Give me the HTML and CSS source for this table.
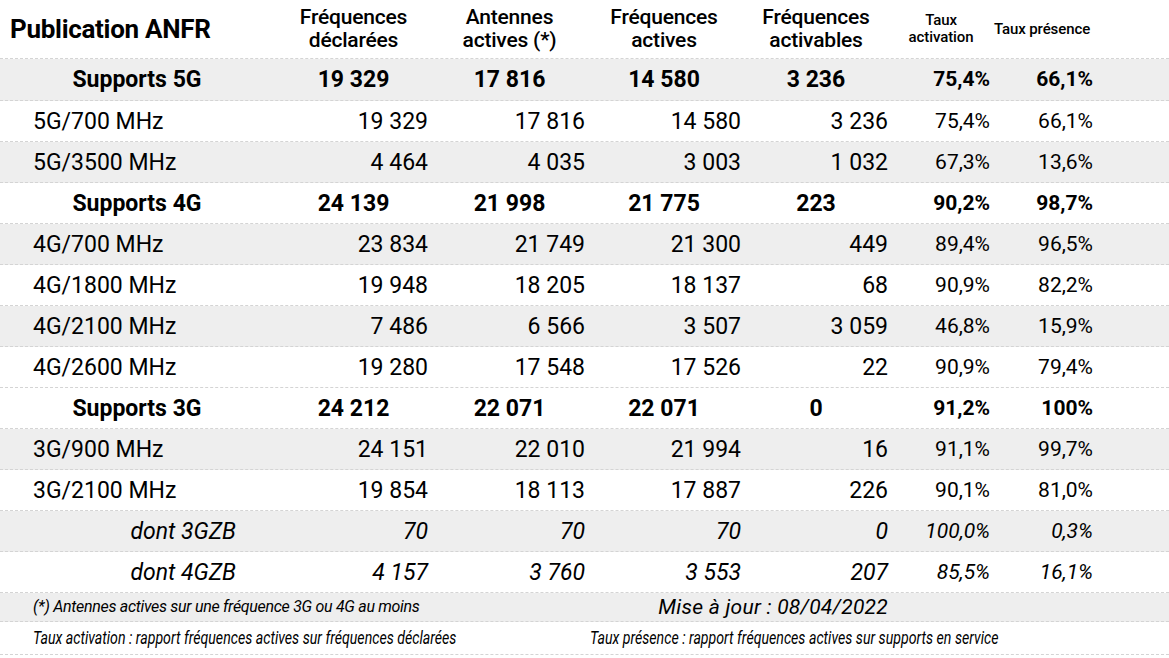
FILE: index.html
```html
<!DOCTYPE html>
<html lang="fr">
<head>
<meta charset="utf-8">
<title>Publication ANFR</title>
<link rel="stylesheet" href="styles.css">
</head>
<body>
<div class="sheet">
  <div class="row head">
    <div class="title">Publication ANFR</div>
    <div class="h">Fréquences<br>déclarées</div>
    <div class="h">Antennes<br>actives (*)</div>
    <div class="h">Fréquences<br>actives</div>
    <div class="h">Fréquences<br>activables</div>
    <div class="h small">Taux<br>activation</div>
    <div class="h small">Taux présence</div>
    <div></div>
  </div>

  <div class="row bold gray first">
    <div>Supports 5G</div><div>19&nbsp;329</div><div>17&nbsp;816</div><div>14&nbsp;580</div><div>3&nbsp;236</div><div class="p">75,4%</div><div class="p">66,1%</div><div></div>
  </div>
  <div class="row">
    <div>5G/700 MHz</div><div>19&nbsp;329</div><div>17&nbsp;816</div><div>14&nbsp;580</div><div>3&nbsp;236</div><div class="p">75,4%</div><div class="p">66,1%</div><div></div>
  </div>
  <div class="row gray">
    <div>5G/3500 MHz</div><div>4&nbsp;464</div><div>4&nbsp;035</div><div>3&nbsp;003</div><div>1&nbsp;032</div><div class="p">67,3%</div><div class="p">13,6%</div><div></div>
  </div>
  <div class="row bold">
    <div>Supports 4G</div><div>24&nbsp;139</div><div>21&nbsp;998</div><div>21&nbsp;775</div><div>223</div><div class="p">90,2%</div><div class="p">98,7%</div><div></div>
  </div>
  <div class="row gray">
    <div>4G/700 MHz</div><div>23&nbsp;834</div><div>21&nbsp;749</div><div>21&nbsp;300</div><div>449</div><div class="p">89,4%</div><div class="p">96,5%</div><div></div>
  </div>
  <div class="row">
    <div>4G/1800 MHz</div><div>19&nbsp;948</div><div>18&nbsp;205</div><div>18&nbsp;137</div><div>68</div><div class="p">90,9%</div><div class="p">82,2%</div><div></div>
  </div>
  <div class="row gray">
    <div>4G/2100 MHz</div><div>7&nbsp;486</div><div>6&nbsp;566</div><div>3&nbsp;507</div><div>3&nbsp;059</div><div class="p">46,8%</div><div class="p">15,9%</div><div></div>
  </div>
  <div class="row">
    <div>4G/2600 MHz</div><div>19&nbsp;280</div><div>17&nbsp;548</div><div>17&nbsp;526</div><div>22</div><div class="p">90,9%</div><div class="p">79,4%</div><div></div>
  </div>
  <div class="row bold">
    <div>Supports 3G</div><div>24&nbsp;212</div><div>22&nbsp;071</div><div>22&nbsp;071</div><div>0</div><div class="p">91,2%</div><div class="p">100%</div><div></div>
  </div>
  <div class="row gray">
    <div>3G/900 MHz</div><div>24&nbsp;151</div><div>22&nbsp;010</div><div>21&nbsp;994</div><div>16</div><div class="p">91,1%</div><div class="p">99,7%</div><div></div>
  </div>
  <div class="row">
    <div>3G/2100 MHz</div><div>19&nbsp;854</div><div>18&nbsp;113</div><div>17&nbsp;887</div><div>226</div><div class="p">90,1%</div><div class="p">81,0%</div><div></div>
  </div>
  <div class="row ital gray">
    <div>dont 3GZB</div><div>70</div><div>70</div><div>70</div><div>0</div><div class="p">100,0%</div><div class="p">0,3%</div><div></div>
  </div>
  <div class="row ital">
    <div>dont 4GZB</div><div>4&nbsp;157</div><div>3&nbsp;760</div><div>3&nbsp;553</div><div>207</div><div class="p">85,5%</div><div class="p">16,1%</div><div></div>
  </div>

  <div class="row foot1 gray">
    <div class="note">(*) Antennes actives sur une fréquence 3G ou 4G au moins</div>
    <div class="update">Mise à jour : 08/04/2022</div>
    <div></div>
  </div>
  <div class="row foot2">
    <div class="def"><span class="cond">Taux activation : rapport fréquences actives sur fréquences déclarées</span></div>
    <div class="def def2"><span class="cond">Taux présence : rapport fréquences actives sur supports en service</span></div>
  </div>
</div>
</body>
</html>
```

FILE: styles.css
```css
html, body {
  margin: 0;
  padding: 0;
  background: #ffffff;
}

body {
  font-family: Roboto, "Liberation Sans", Arial, sans-serif;
  color: #000000;
}

.sheet {
  width: 1169px;
}

.row {
  display: grid;
  grid-template-columns: 279px 155px 153px 157px 148px 99px 102px 1fr;
  align-items: center;
  height: 41px;
  box-sizing: border-box;
  border-bottom: 1px dashed #d4d4d4;
  font-size: 23px;
  line-height: 27px;
  white-space: nowrap;
}

.gray {
  background: #eeeeee;
}

/* default data cells */
.row > div {
  text-align: right;
}

.row > div:nth-child(1) {
  text-align: left;
  padding-left: 33px;
}

.row > div:nth-child(2) { padding-right: 6px; }
.row > div:nth-child(3) { padding-right: 2px; }
.row > div:nth-child(4) { padding-right: 3px; }
.row > div:nth-child(5) { padding-right: 4px; }
.row > div:nth-child(6) { padding-right: 1px; }
.row > div:nth-child(7) { padding-right: 0; }

.row > .p {
  font-size: 21px;
}

/* header */
.head {
  height: 59px;
}

.first {
  height: 42px;
}

.head > div.title {
  padding-left: 10px;
  font-size: 26px;
  font-weight: 700;
  line-height: 30px;
  letter-spacing: -0.3px;
}

.head > div.h {
  text-align: center;
  font-size: 21px;
  font-weight: 500;
  line-height: 23px;
  letter-spacing: -0.2px;
}

.head > div.small {
  font-size: 15px;
  line-height: 17px;
  letter-spacing: -0.1px;
}

/* bold summary rows */
.bold {
  font-weight: 700;
}

.bold > div {
  text-align: center;
}

.bold > div:nth-child(1) {
  text-align: center;
  padding-left: 0;
  padding-right: 5px;
}

.bold > div.p {
  text-align: right;
}

/* italic rows */
.ital {
  font-style: italic;
}

.ital > div:nth-child(1) {
  text-align: right;
  padding-left: 0;
  padding-right: 43px;
}

/* footer rows */
.foot1 {
  grid-template-columns: 587px 305px 1fr;
  height: 29px;
  font-style: italic;
}

.foot1 > div.note {
  font-size: 16px;
  line-height: 20px;
  letter-spacing: -0.3px;
  padding-left: 33px;
}

.foot1 > div.update {
  text-align: right;
  padding-right: 4px;
  font-size: 21px;
  line-height: 24px;
  letter-spacing: 0.25px;
}

.foot2 {
  grid-template-columns: 587px 1fr;
  height: 33px;
  font-style: italic;
}

.foot2 > div.def {
  text-align: left;
  padding-left: 33px;
  font-size: 19px;
  line-height: 22px;
}

.foot2 > div.def2 {
  padding-left: 3px;
}

.cond {
  display: inline-block;
  transform: scaleX(0.745);
  transform-origin: left center;
}
```
